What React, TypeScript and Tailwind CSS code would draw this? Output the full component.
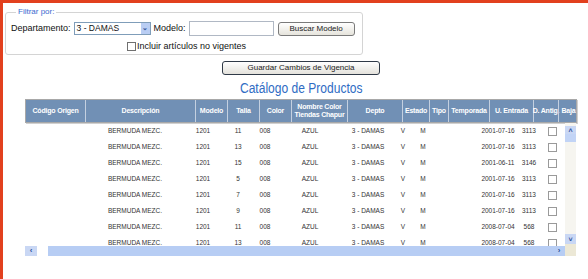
import React from 'react';

const headers = [
  { label: 'Código Origen', w: 'w-[59px]' },
  { label: 'Descripción', w: 'w-[110px]' },
  { label: 'Modelo', w: 'w-[32px]' },
  { label: 'Talla', w: 'w-[32px]' },
  { label: 'Color', w: 'w-[32px]' },
  { label: 'Nombre Color Tiendas Chapur', w: 'w-[56px]' },
  { label: 'Depto', w: 'w-[55px]' },
  { label: 'Estado', w: 'w-[27px]' },
  { label: 'Tipo', w: 'w-[19px]' },
  { label: 'Temporada', w: 'w-[41px]' },
  { label: 'U. Entrada', w: 'w-[44px]' },
  { label: 'D. Antig.', w: 'w-[25px]' },
  { label: 'Baja', w: 'w-[20px]' },
];

const rows = [
  { talla: '11', fecha: '2001-07-16', dias: '3113' },
  { talla: '13', fecha: '2001-07-16', dias: '3113' },
  { talla: '15', fecha: '2001-06-11', dias: '3146' },
  { talla: '5', fecha: '2001-07-16', dias: '3113' },
  { talla: '7', fecha: '2001-07-16', dias: '3113' },
  { talla: '9', fecha: '2001-07-16', dias: '3113' },
  { talla: '11', fecha: '2008-07-04', dias: '568' },
  { talla: '13', fecha: '2008-07-04', dias: '568' },
];

const Row: React.FC<{ talla: string; fecha: string; dias: string }> = ({ talla, fecha, dias }) => (
  <div className="flex h-[16px] shrink-0 items-center text-[6.5px] text-[#333]">
    <div className="w-[59px]" />
    <div className="w-[102px] text-center">BERMUDA MEZC.</div>
    <div className="w-[34px] text-center">1201</div>
    <div className="w-[36px] text-center">{talla}</div>
    <div className="w-[18px] text-center">008</div>
    <div className="w-[72px] text-center">AZUL</div>
    <div className="w-[44px] text-center">3 - DAMAS</div>
    <div className="w-[26px] text-center">V</div>
    <div className="w-[14px] text-center">M</div>
    <div className="w-[48px]" />
    <div className="w-[40px] text-center">{fecha}</div>
    <div className="w-[22px] text-center">{dias}</div>
    <div className="flex w-[25px] justify-center">
      <span className="block h-[9px] w-[9px] border border-[#9a9a9a] bg-white" />
    </div>
  </div>
);

export default function App() {
  return (
    <div className="flex h-[279px] w-[588px] flex-col overflow-hidden bg-white font-['Liberation_Sans',Arial,sans-serif]">
      <div className="h-[3px] shrink-0 bg-[#e2401e]" />
      <div className="flex flex-1">
        <div className="w-[3px] shrink-0 bg-[#e2401e]" />
        <div className="flex-1">
          {/* filtros */}
          <fieldset className="ml-[2px] mt-[5px] h-[47px] w-[358px] rounded-[3px] border border-[#d4d4d4] px-[5px]">
            <legend className="ml-[5px] px-[2px] text-[8px] leading-[8px] text-[#3a6ad0]">Filtrar por:</legend>
            <div className="mt-[5px] flex items-center text-[9px] text-[#111]">
              <span>Departamento:</span>
              <div className="ml-[3px] flex h-[13px] w-[77px] items-center border border-[#7f9db9] bg-white">
                <span className="flex-1 pl-[2px] text-[8.5px]">3 - DAMAS</span>
                <span className="flex h-[11px] w-[9px] items-center justify-center bg-[#b9cdf3] text-[7px] font-bold text-[#3a5a9c]">⌄</span>
              </div>
              <span className="ml-[3px]">Modelo:</span>
              <div className="ml-[3px] h-[15px] w-[85px] border border-[#b0b8c4] bg-white" />
              <button className="ml-[4px] h-[14px] w-[77px] rounded-[3px] border border-[#7a7a7a] bg-gradient-to-b from-white to-[#e6e4dc] text-[8px] leading-[12px] text-[#222]">
                Buscar Modelo
              </button>
            </div>
            <div className="mt-[4px] flex items-center pl-[116px] text-[9px] text-[#111]">
              <span className="mr-[1px] block h-[9px] w-[9px] border border-[#707070] bg-white" />
              <span>Incluir artículos no vigentes</span>
            </div>
          </fieldset>

          {/* catalogo */}
          <div className="ml-[22px] w-[552px]">
            <div className="mt-[6px] flex justify-center">
              <button className="h-[14px] w-[158px] rounded-[3px] border border-[#303a48] bg-gradient-to-b from-white to-[#e4e2dc] text-[8px] leading-[12px] text-[#222]">
                Guardar Cambios de Vigencia
              </button>
            </div>
            <div className="mt-[5px] flex h-[16px] items-center justify-center">
              <span className="inline-block scale-x-[0.86] whitespace-nowrap text-[14px] leading-[16px] text-[#2f6cc4]">Catálogo de Productos</span>
            </div>

            <div className="mt-[3px] flex h-[24px] border border-[#a8a8a8] bg-[#7190b5] shadow-[1px_1px_0_#d0d0d0]">
              {headers.map((h, i) => (
                <div
                  key={h.label}
                  className={`${h.w} flex shrink-0 items-center justify-center text-center text-[7px] font-bold leading-[8px] tracking-[-0.2px] text-white ${
                    i > 0 ? 'border-l border-[#c4d0e0]' : ''
                  } ${h.label.startsWith('Nombre') ? '' : 'whitespace-nowrap'}`}
                >
                  {h.label}
                </div>
              ))}
            </div>

            <div className="flex">
              <div className="flex w-[540px] flex-col">
                <div className="flex h-[123px] flex-col overflow-hidden">
                  {rows.map((r, i) => (
                    <Row key={i} {...r} />
                  ))}
                </div>
                {/* barra horizontal */}
                <div className="flex h-[10px] items-stretch bg-white">
                  <div className="flex w-[12px] items-center justify-center bg-[#c9d7f4] text-[8px] font-bold leading-none text-[#2a4f9a]">‹</div>
                  <div className="w-[11px]" />
                  <div className="flex-1 bg-[#b7cdf4]" />
                  <div className="flex w-[12px] items-center justify-center bg-[#b7cdf4] text-[8px] font-bold leading-none text-[#2a4f9a]">›</div>
                </div>
              </div>
              {/* barra vertical */}
              <div className="flex w-[11px] flex-col bg-[#f6f5f0]">
                <div className="mt-[3px] flex h-[8px] items-center justify-center bg-[#c9d7f4] text-[7px] font-bold leading-none text-[#2a4f9a]">˄</div>
                <div className="h-[8px] bg-[#c2d4f6]" />
                <div className="flex-1" />
                <div className="flex h-[10px] items-center justify-center bg-[#c9d7f4] text-[7px] font-bold leading-none text-[#2a4f9a]">˅</div>
                <div className="h-[12px] bg-[#ece8d6]" />
              </div>
            </div>
          </div>
        </div>
      </div>
    </div>
  );
}
